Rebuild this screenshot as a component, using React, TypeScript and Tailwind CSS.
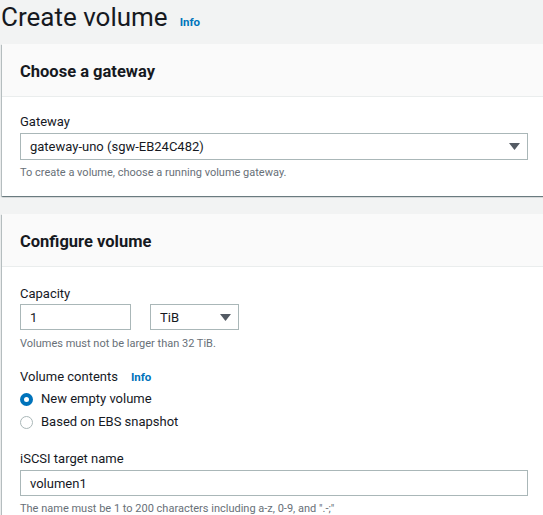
import React from "react";

const font = { fontFamily: 'Roboto, "Noto Sans", Arial, sans-serif' };

function Arrow() {
  return (
    <svg width="11" height="7" viewBox="0 0 11 7" className="shrink-0">
      <polygon points="0,0 11,0 5.5,7" fill="#545b64" />
    </svg>
  );
}

function Card({ title, children }: { title: string; children: React.ReactNode }) {
  return (
    <div className="ml-[2px] w-[560px] bg-white shadow-[0_1px_1px_0_rgba(0,28,36,0.35),1px_1px_1px_0_rgba(0,28,36,0.15),-1px_1px_1px_0_rgba(0,28,36,0.2)]">
      <div className="h-[53px] bg-[#fafafa] border-b border-[#eaeded] flex items-center pl-[18px] pt-[3px]">
        <h2 className="text-[16.5px] leading-[22px] font-bold text-[#16191f]">{title}</h2>
      </div>
      <div className="pl-[18px] w-[526px]">{children}</div>
    </div>
  );
}

export default function App() {
  return (
    <div style={font} className="w-[543px] h-[515px] overflow-hidden bg-[#f2f3f3] text-[#16191f]">
      <div className="flex items-baseline h-[44px] pl-[1px] pt-[2px]">
        <h1 className="text-[26px] leading-[30px] font-normal text-[#16191f]">Create volume</h1>
        <span className="ml-[12px] text-[11.5px] font-bold text-[#0073bb]">Info</span>
      </div>

      <Card title="Choose a gateway">
        <div className="pt-[15px] pb-[15px]">
          <div className="text-[13px] leading-[20px]">Gateway</div>
          <div className="mt-[1px] h-[27px] border border-[#aab7b8] flex items-center justify-between pl-[9px] pr-[7px]">
            <span className="text-[13px] leading-[20px] pt-[1px]">gateway-uno (sgw-EB24C482)</span>
            <Arrow />
          </div>
          <div className="mt-[5px] text-[11px] leading-[16px] text-[#687078]">
            To create a volume, choose a running volume gateway.
          </div>
        </div>
      </Card>

      <div className="h-[18px]" />

      <Card title="Configure volume">
        <div className="pt-[17px]">
          <div className="text-[13px] leading-[20px]">Capacity</div>
          <div className="flex gap-[19px]">
            <div className="w-[111px] h-[26px] border border-[#aab7b8] flex items-center pl-[9px] pt-[1px] text-[13px]">1</div>
            <div className="w-[89px] h-[26px] border border-[#aab7b8] flex items-center justify-between pl-[9px] pr-[7px] text-[13px]">
              <span className="pt-[1px]">TiB</span>
              <Arrow />
            </div>
          </div>
          <div className="mt-[6px] text-[11px] leading-[16px] text-[#687078]">Volumes must not be larger than 32 TiB.</div>

          <div className="mt-[15px] flex items-center text-[13px] leading-[20px]">
            <span>Volume contents</span>
            <span className="ml-[13px] text-[11.5px] font-bold text-[#0073bb]">Info</span>
          </div>
          <div className="mt-[2px] flex items-center h-[20px]">
            <span className="w-[13px] h-[13px] rounded-full border-[4px] border-[#0073bb] bg-white box-border" />
            <span className="ml-[8px] text-[13px] leading-[20px]">New empty volume</span>
          </div>
          <div className="mt-[3px] flex items-center h-[20px]">
            <span className="w-[13px] h-[13px] rounded-full border border-[#aab7b8] bg-white box-border" />
            <span className="ml-[8px] text-[13px] leading-[20px]">Based on EBS snapshot</span>
          </div>

          <div className="mt-[17px] text-[13px] leading-[20px]">iSCSI target name</div>
          <div className="mt-[1px] h-[26px] border border-[#aab7b8] flex items-center pl-[9px] pt-[1px] text-[13px]">volumen1</div>
          <div className="mt-[5px] text-[11px] leading-[16px] text-[#687078]">
            The name must be 1 to 200 characters including a-z, 0-9, and ".-;"
          </div>
        </div>
      </Card>
    </div>
  );
}
